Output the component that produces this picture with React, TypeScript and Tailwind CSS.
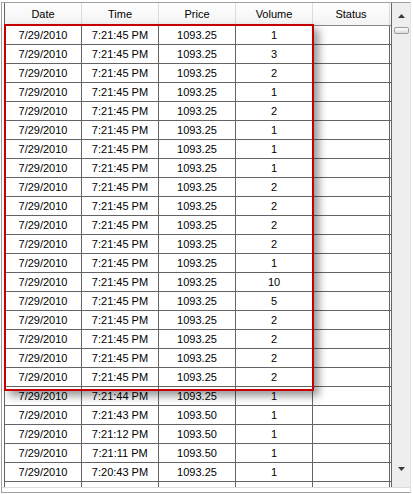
const rows: [string, string, string][] = [
  ['7:21:45 PM', '1093.25', '1'],
  ['7:21:45 PM', '1093.25', '3'],
  ['7:21:45 PM', '1093.25', '2'],
  ['7:21:45 PM', '1093.25', '1'],
  ['7:21:45 PM', '1093.25', '2'],
  ['7:21:45 PM', '1093.25', '1'],
  ['7:21:45 PM', '1093.25', '1'],
  ['7:21:45 PM', '1093.25', '1'],
  ['7:21:45 PM', '1093.25', '2'],
  ['7:21:45 PM', '1093.25', '2'],
  ['7:21:45 PM', '1093.25', '2'],
  ['7:21:45 PM', '1093.25', '2'],
  ['7:21:45 PM', '1093.25', '1'],
  ['7:21:45 PM', '1093.25', '10'],
  ['7:21:45 PM', '1093.25', '5'],
  ['7:21:45 PM', '1093.25', '2'],
  ['7:21:45 PM', '1093.25', '2'],
  ['7:21:45 PM', '1093.25', '2'],
  ['7:21:45 PM', '1093.25', '2'],
  ['7:21:44 PM', '1093.25', '1'],
  ['7:21:43 PM', '1093.50', '1'],
  ['7:21:12 PM', '1093.50', '1'],
  ['7:21:11 PM', '1093.50', '1'],
  ['7:20:43 PM', '1093.25', '1'],
];

const headers = ['Date', 'Time', 'Price', 'Volume', 'Status'];

function Row({ cells }: { cells: string[] }) {
  return (
    <div className="flex h-[19px] shrink-0 border-b border-[#646464]">
      {cells.map((c, i) => (
        <div
          key={i}
          className="w-[77px] shrink-0 flex items-center justify-center border-r border-[#646464] text-black"
        >
          {c}
        </div>
      ))}
    </div>
  );
}

export default function App() {
  return (
    <div
      className="relative w-[413px] h-[494px] bg-white overflow-hidden text-[11px]"
      style={{ fontFamily: '"Liberation Sans", Arial, sans-serif' }}
    >
      <div className="ml-[1px] mt-[2px] w-[410px] h-[491px] border-l border-b border-t border-[#a0a0a0] border-r-[#e2e2e2] border-r flex flex-col">
        <div className="flex h-[485px] pl-[2px] border-b border-[#dcdcdc]">
          {/* grid */}
          <div className="w-[387px] flex flex-col border-l border-[#646464] overflow-hidden">
            <div className="flex h-[23px] shrink-0 bg-gradient-to-b from-white to-[#f3f3f3] border-b border-[#8a8a8a]">
              {headers.map((h) => (
                <div
                  key={h}
                  className="w-[77px] shrink-0 flex items-center justify-center border-r border-[#dcdcdc] text-black"
                >
                  {h}
                </div>
              ))}
            </div>
            {rows.map((r, i) => (
              <Row key={i} cells={['7/29/2010', r[0], r[1], r[2], '']} />
            ))}
            <Row cells={['', '', '', '', '']} />
          </div>
          {/* scrollbar */}
          <div className="w-[19px] border-l border-[#646464] bg-[#eeeeee] flex flex-col items-center">
            <div className="h-[22px] w-full flex items-center justify-center pt-[4px]">
              <svg width="7" height="4" viewBox="0 0 7 4">
                <path d="M3.5 0 L7 4 L0 4 Z" fill="#3a3a3a" />
              </svg>
            </div>
            <div className="mt-[2px] w-[15px] h-[7px] rounded-[2px] border border-[#9a9a9a] bg-gradient-to-b from-[#fdfdfd] to-[#dcdcdc]" />
            <div className="flex-1" />
            <div className="h-[18px] w-full flex items-start justify-center pt-[4px] mb-[6px]">
              <svg width="7" height="4" viewBox="0 0 7 4">
                <path d="M0 0 L7 0 L3.5 4 Z" fill="#3a3a3a" />
              </svg>
            </div>
          </div>
        </div>
      </div>
      {/* highlight box */}
      <div className="absolute left-[4px] top-[24px] w-[310px] h-[367px] border-2 border-[#c40000] shadow-[5px_5px_8px_rgba(0,0,0,0.4)] pointer-events-none" />
    </div>
  );
}
